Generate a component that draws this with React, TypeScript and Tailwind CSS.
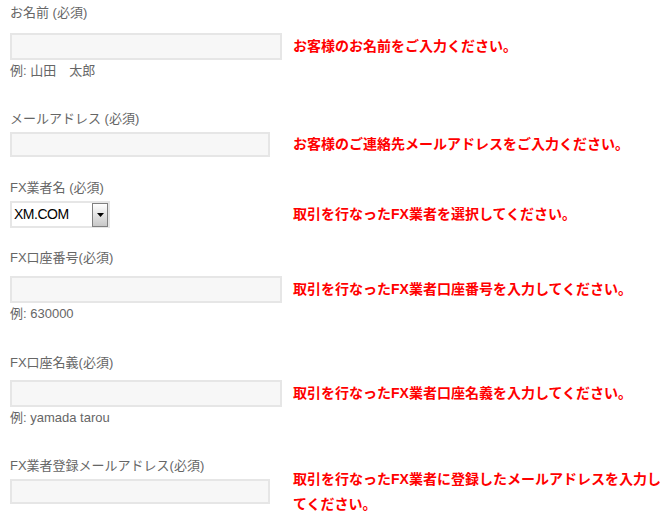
import React from 'react';

// Shared font stacks
const jp = "font-['Liberation_Sans','Noto_Sans_CJK_JP',sans-serif]";

type FieldProps = {
  label: string;
  note: React.ReactNode;
  example?: string;
  wrapClass: string; // top margin of the label
  rowClass: string; // top margin + height of the input row
  inputClass: string; // size of the input box
  children?: React.ReactNode;
};

function Field({ label, note, example, wrapClass, rowClass, inputClass, children }: FieldProps) {
  return (
    <div className={wrapClass}>
      <div className="text-[13px] leading-[20px] text-[#666]">{label}</div>
      <div className={`flex items-center ${rowClass}`}>
        <div className="w-[283px] shrink-0">
          {children ?? (
            <input
              type="text"
              className={`block border-2 border-[#e6e6e6] bg-[#f7f7f7] outline-none ${inputClass}`}
            />
          )}
        </div>
        <p className="w-[376px] text-[14px] font-bold leading-[25px] text-[#ff0000]">{note}</p>
      </div>
      {example && (
        <div className="mt-[1px] text-[13px] leading-[20px] text-[#666]">{example}</div>
      )}
    </div>
  );
}

function BrokerSelect() {
  return (
    <div className="flex h-[27px] w-[100px] items-center border-2 border-[#e6e6e6] bg-white">
      <span className="flex-1 pl-[2px] text-[14px] tracking-[-0.5px] text-black">XM.COM</span>
      <span className="flex h-[24px] w-[16px] items-center justify-center border border-[#808080] bg-gradient-to-b from-white to-[#c8c8c8]">
        <svg width="7" height="4" viewBox="0 0 7 4">
          <path d="M0 0h7L3.5 4z" fill="#000" />
        </svg>
      </span>
    </div>
  );
}

export default function App() {
  return (
    <div className={`h-[513px] w-[669px] overflow-hidden bg-white pl-[10px] pt-[3px] ${jp}`}>
      <Field
        label="お名前 (必須)"
        note="お客様のお名前をご入力ください。"
        example="例: 山田　太郎"
        wrapClass=""
        rowClass="mt-[10px] h-[27px]"
        inputClass="h-[27px] w-[272px]"
      />
      <Field
        label="メールアドレス (必須)"
        note="お客様のご連絡先メールアドレスをご入力ください。"
        wrapClass="mt-[28px]"
        rowClass="mt-[3px] h-[25px]"
        inputClass="h-[25px] w-[260px]"
      />
      <Field
        label="FX業者名 (必須)"
        note="取引を行なったFX業者を選択してください。"
        wrapClass="mt-[21px]"
        rowClass="mt-[3px] h-[27px]"
        inputClass=""
      >
        <BrokerSelect />
      </Field>
      <Field
        label="FX口座番号(必須)"
        note="取引を行なったFX業者口座番号を入力してください。"
        example="例: 630000"
        wrapClass="mt-[20px]"
        rowClass="mt-[8px] h-[27px]"
        inputClass="h-[27px] w-[272px]"
      />
      <Field
        label="FX口座名義(必須)"
        note="取引を行なったFX業者口座名義を入力してください。"
        example="例: yamada tarou"
        wrapClass="mt-[29px]"
        rowClass="mt-[7px] h-[27px]"
        inputClass="h-[27px] w-[272px]"
      />
      <Field
        label="FX業者登録メールアドレス(必須)"
        note="取引を行なったFX業者に登録したメールアドレスを入力してください。"
        wrapClass="mt-[28px]"
        rowClass="mt-[3px] h-[25px]"
        inputClass="h-[25px] w-[260px]"
      />
    </div>
  );
}
